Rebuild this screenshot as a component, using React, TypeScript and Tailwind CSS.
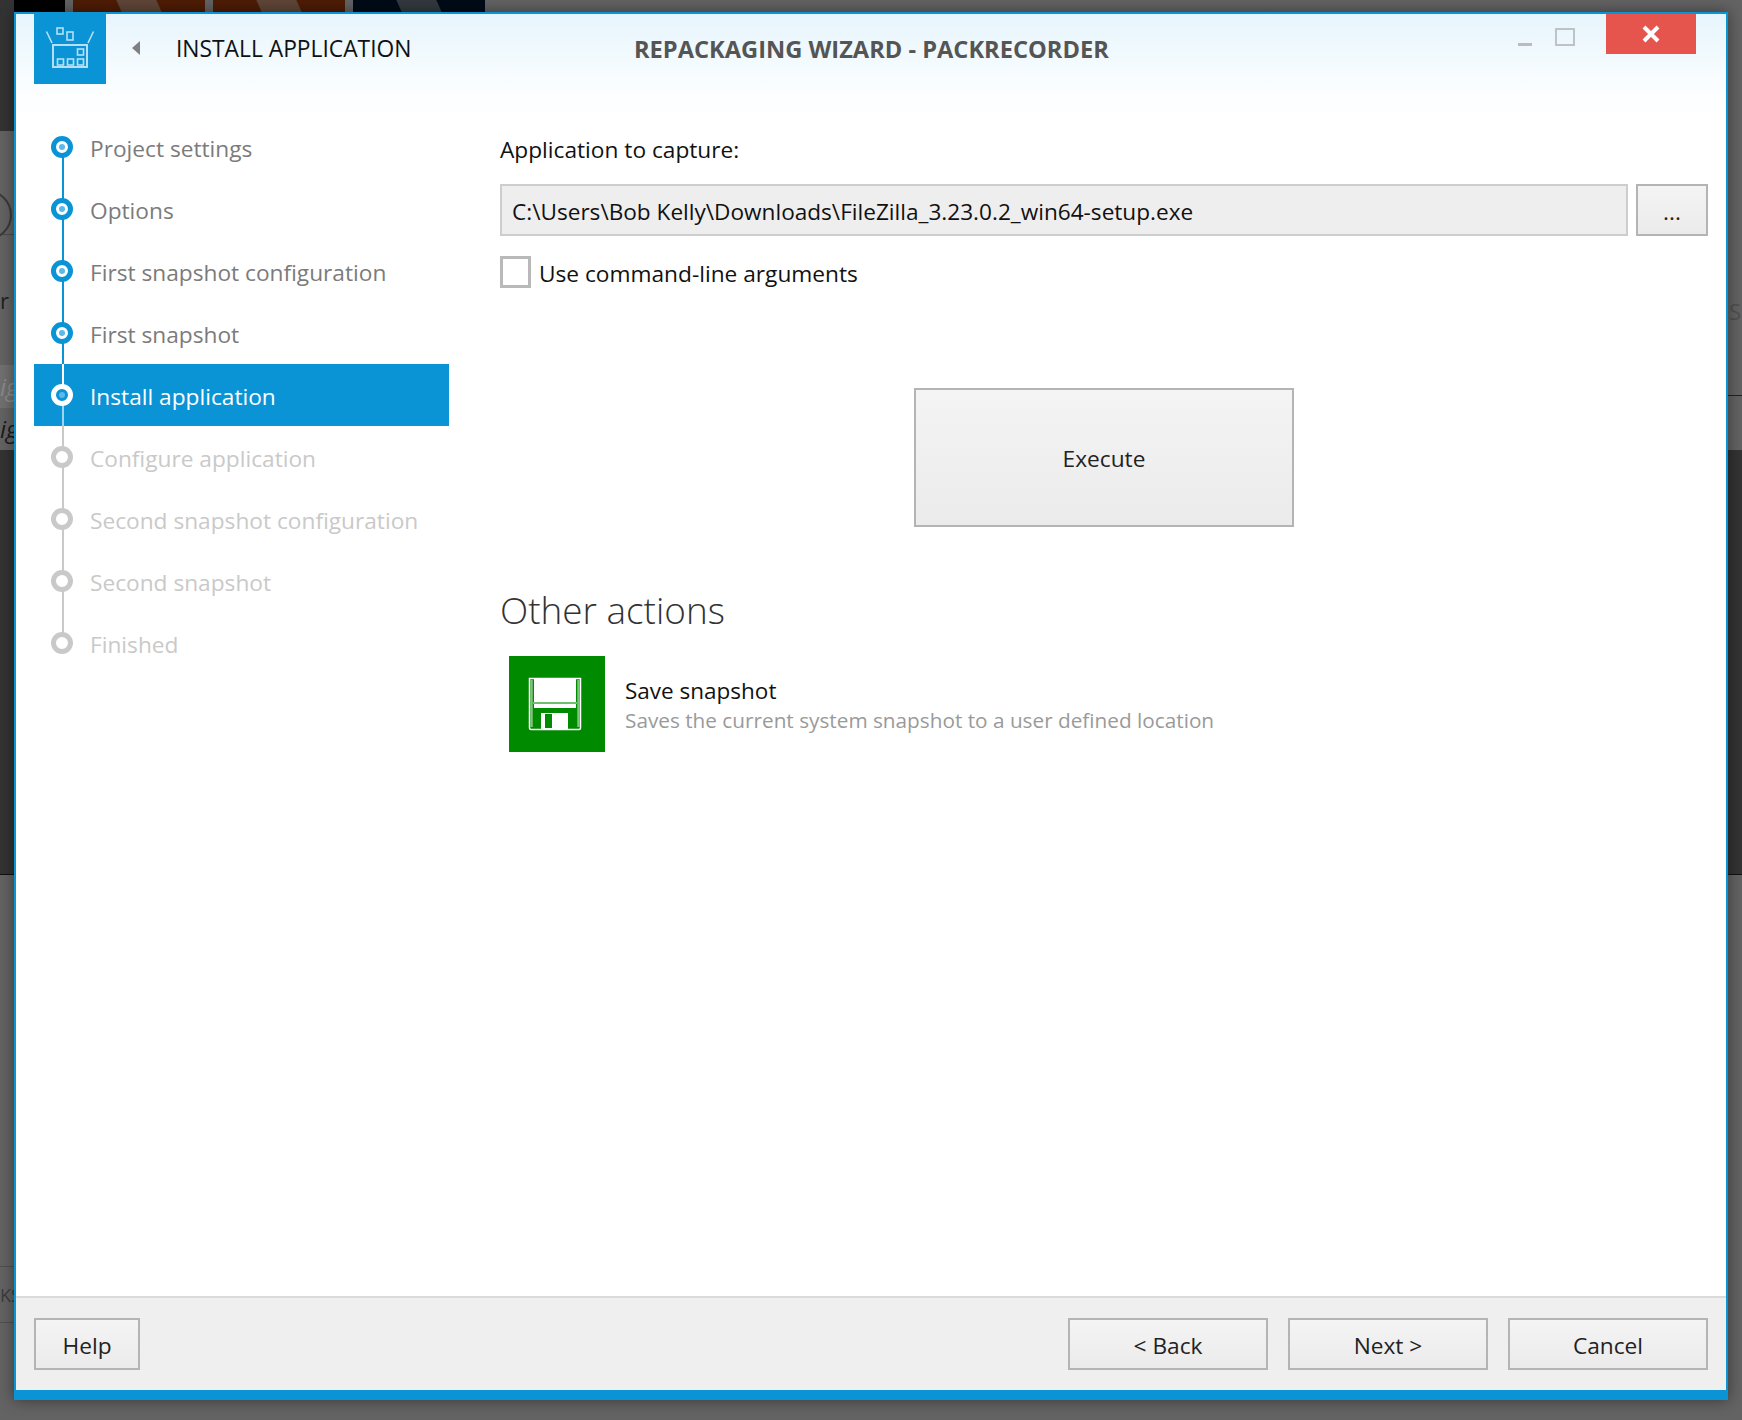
const steps = [
  { label: "Project settings", state: "done" },
  { label: "Options", state: "done" },
  { label: "First snapshot configuration", state: "done" },
  { label: "First snapshot", state: "done" },
  { label: "Install application", state: "active" },
  { label: "Configure application", state: "todo" },
  { label: "Second snapshot configuration", state: "todo" },
  { label: "Second snapshot", state: "todo" },
  { label: "Finished", state: "todo" },
];

function StepRow({ label, state, index }: { label: string; state: string; index: number }) {
  const isActive = state === "active";
  const isDone = state === "done";
  const isLast = index === steps.length - 1;
  return (
    <div
      className={`relative flex h-[62px] w-[415px] items-center pl-[56px] ${
        isActive ? "bg-[#0a94d6] text-white" : isDone ? "text-[#7b7b7b]" : "text-[#c9c9c9]"
      }`}
    >
      {/* connector, upper and lower half */}
      {index > 0 && (
        <span
          className={`absolute top-0 left-[28px] h-[31px] w-[2px] ${
            isActive ? "bg-white" : isDone ? "bg-[#0a94d6]" : "bg-[#c9c9c9]"
          }`}
        />
      )}
      {!isLast && (
        <span
          className={`absolute bottom-0 left-[28px] h-[31px] w-[2px] ${
            isActive ? "bg-[#9fd3ef]" : isDone ? "bg-[#0a94d6]" : "bg-[#c9c9c9]"
          }`}
        />
      )}
      <span
        className={`absolute top-[20px] left-[17px] flex h-[22px] w-[22px] items-center justify-center rounded-full border-[5px] ${
          isActive ? "border-white bg-[#0a94d6]" : isDone ? "border-[#0a94d6] bg-white" : "border-[#c9c9c9] bg-white"
        }`}
      >
        {(isActive || isDone) && <span className="h-[6px] w-[6px] rounded-full bg-[#5cb9ea]" />}
      </span>
      <span className="pt-[4px] text-[22.7px] leading-none">{label}</span>
    </div>
  );
}

function Button({ className, children }: { className: string; children: React.ReactNode }) {
  return (
    <button
      className={`flex h-[52px] items-center justify-center border-2 border-[#b4b4b4] bg-gradient-to-b from-[#f4f4f4] to-[#ebebeb] pt-[4px] text-[22.7px] text-[#222] ${className}`}
    >
      {children}
    </button>
  );
}

function Tile({ base, stripe }: { base: string; stripe: string }) {
  return (
    <div className={`flex h-[12px] w-[132px] justify-center overflow-hidden ${base}`}>
      <div className={`h-[12px] w-[40px] skew-x-[24deg] ${stripe}`} />
    </div>
  );
}

export default function App() {
  return (
    <div
      className="relative h-[1420px] w-[1742px] overflow-hidden bg-[#636363]"
      style={{ fontFamily: '"Open Sans", "Noto Sans", sans-serif' }}
    >
      {/* desktop behind the dialog */}
      <div className="absolute inset-x-0 top-[450px] h-[425px] border-b border-[#111] bg-[#333]" />
      <div className="absolute top-0 left-0 flex w-[14px] flex-col overflow-hidden whitespace-nowrap">
        <div className="h-[131px] bg-[#333]" />
        <div className="flex h-[104px] items-end border-b border-[#4a4a4a]">
          <div className="-mb-[6px] -ml-[38px] h-[50px] w-[50px] shrink-0 rounded-full border-2 border-[#3a3a3a]" />
        </div>
        <div className="flex h-[130px] items-center text-[22px] leading-none text-[#222]">r</div>
        <div className="flex h-[43px] items-center bg-[#707070] text-[24px] leading-none text-[#8a8a8a] italic">ig</div>
        <div className="flex h-[42px] items-center text-[24px] leading-none text-[#1c1c1c] italic">ig</div>
      </div>
      <div className="absolute top-[1266px] left-0 flex h-[57px] w-[14px] items-center overflow-hidden border-y border-[#505050] text-[18px] leading-none whitespace-nowrap text-[#3c3c3c]">
        KS
      </div>
      <div className="absolute top-[300px] right-0 flex h-[96px] w-[14px] items-start justify-center border-b border-[#222] text-[22px] leading-none text-[#505050]">
        S
      </div>
      <div className="absolute top-0 left-[14px] flex gap-[8px]">
        <div className="h-[12px] w-[51px] bg-black" />
        <Tile base="bg-[#4e1c05]" stripe="bg-[#604537]" />
        <Tile base="bg-[#4e1c05]" stripe="bg-[#604537]" />
        <Tile base="bg-[#010b17]" stripe="bg-[#33393f]" />
      </div>

      {/* dialog */}
      <div className="absolute top-[12px] left-[14px] flex h-[1388px] w-[1714px] flex-col border-x-2 border-t-2 border-b-[10px] border-[#0a94d6] bg-white shadow-[0_0_14px_rgba(0,0,0,0.45)]">
        {/* title bar */}
        <div className="flex h-[102px] shrink-0 items-start bg-gradient-to-b from-[#e6f5fc] via-[#fafdff] via-70% to-white">
          <div className="flex w-[618px] shrink-0 items-start pl-[18px]">
            <div className="h-[70px] w-[72px] bg-[#0a94d6]">
              <svg width="72" height="70" viewBox="0 0 72 70" fill="none" stroke="#b5dff5" strokeWidth="2">
                <rect x="19" y="31" width="34" height="22" />
                <rect x="23.5" y="45" width="6" height="6" strokeWidth="1.6" />
                <rect x="33.5" y="45" width="6" height="6" strokeWidth="1.6" />
                <rect x="43.5" y="45" width="6" height="6" strokeWidth="1.6" />
                <rect x="43.5" y="35" width="6" height="6" strokeWidth="1.6" />
                <rect x="23" y="14" width="6" height="6" strokeWidth="1.6" />
                <rect x="33" y="18" width="6" height="8" strokeWidth="1.6" />
                <path d="M12.500 17.500 L18 29 M59.500 17.500 L54 29" strokeWidth="1.600" />
              </svg>
            </div>
            <svg className="mt-[27px] ml-[26px]" width="8" height="14" viewBox="0 0 8 14">
              <path d="M8 0 V14 L0 7 Z" fill="#808080" />
            </svg>
            <h1 className="mt-[20px] ml-[36px] text-[22.8px] leading-[30px] text-[#111]">INSTALL APPLICATION</h1>
          </div>
          <h2 className="mt-[20px] text-[23.65px] leading-[30px] font-bold text-[#555]">REPACKAGING WIZARD - PACKRECORDER</h2>
          {/* window controls */}
          <div className="mr-[30px] ml-auto flex items-start">
            <span className="mt-[29px] h-[3px] w-[14px] bg-[#bcbcbc]" />
            <span className="mt-[14px] ml-[23px] h-[18px] w-[20px] border-2 border-[#bcc4c8]" />
            <div className="ml-[31px] flex h-[40px] w-[90px] items-center justify-center bg-[#e5554e]">
              <svg width="18" height="18" viewBox="0 0 18 18" stroke="white" strokeWidth="4">
                <path d="M2 2 L16 16 M16 2 L2 16" />
              </svg>
            </div>
          </div>
        </div>

        {/* body */}
        <div className="flex min-h-0 flex-1">
          <nav className="w-[484px] shrink-0 pl-[18px]">
            {steps.map((step, i) => (
              <StepRow key={step.label} label={step.label} state={step.state} index={i} />
            ))}
          </nav>

          <main className="min-w-0 flex-1 pr-[18px] text-[#111]">
            <p className="mt-[19px] text-[22.7px] leading-[30px]">Application to capture:</p>
            <div className="mt-[19px] flex gap-[8px]">
              <div className="flex h-[52px] w-[1128px] items-center border-2 border-[#cdcdcd] bg-[#eeeeee] pt-[4px] pl-[10px] text-[22.6px]">
                C:\Users\Bob Kelly\Downloads\FileZilla_3.23.0.2_win64-setup.exe
              </div>
              <Button className="w-[72px]">...</Button>
            </div>
            <label className="mt-[20px] flex h-[32px] items-center gap-[8px] text-[22.7px]">
              <span className="h-[32px] w-[31px] border-[3px] border-[#b9b9b9] bg-white" />
              <span className="pt-[4px]">Use command-line arguments</span>
            </label>
            <div className="mt-[100px] flex justify-center">
              <Button className="!h-[139px] w-[380px]">Execute</Button>
            </div>
            <h3 className="mt-[56px] text-[36.9px] leading-[54px] font-light text-[#333]">Other actions</h3>
            <div className="mt-[19px] ml-[9px] flex items-center gap-[20px]">
              <div className="h-[96px] w-[96px] bg-[#008a00]">
                <svg width="96" height="96" viewBox="0 0 96 96" fill="none">
                  <path d="M20.500 22.500 H71.500 V72 Q71.500 73.500 70 73.500 H22 Q20.500 73.500 20.500 72 Z" stroke="white" strokeWidth="1.500" />
                  <path d="M22.500 24 V71 M69.500 24 V71" stroke="#7fc47f" strokeWidth="2.500" />
                  <rect x="25" y="23" width="42" height="23" fill="white" />
                  <rect x="24" y="46" width="44" height="2" fill="#6fbf6f" />
                  <rect x="25" y="48" width="42" height="4" fill="white" />
                  <rect x="32" y="57" width="27" height="17" fill="white" />
                  <rect x="36" y="58" width="7" height="14" fill="#008a00" />
                </svg>
              </div>
              <div className="pt-[3px]">
                <p className="text-[22.5px] leading-[30px]">Save snapshot</p>
                <p className="text-[20.75px] leading-[29px] text-[#9a9a9a]">Saves the current system snapshot to a user defined location</p>
              </div>
            </div>
          </main>
        </div>

        {/* footer */}
        <div className="flex h-[94px] shrink-0 items-start border-t-2 border-[#dadada] bg-[#efefef] px-[18px] pt-[20px]">
          <Button className="w-[106px]">Help</Button>
          <div className="ml-auto flex gap-[20px]">
            <Button className="w-[200px]">&lt; Back</Button>
            <Button className="w-[200px]">Next &gt;</Button>
            <Button className="w-[200px]">Cancel</Button>
          </div>
        </div>
      </div>
    </div>
  );
}
